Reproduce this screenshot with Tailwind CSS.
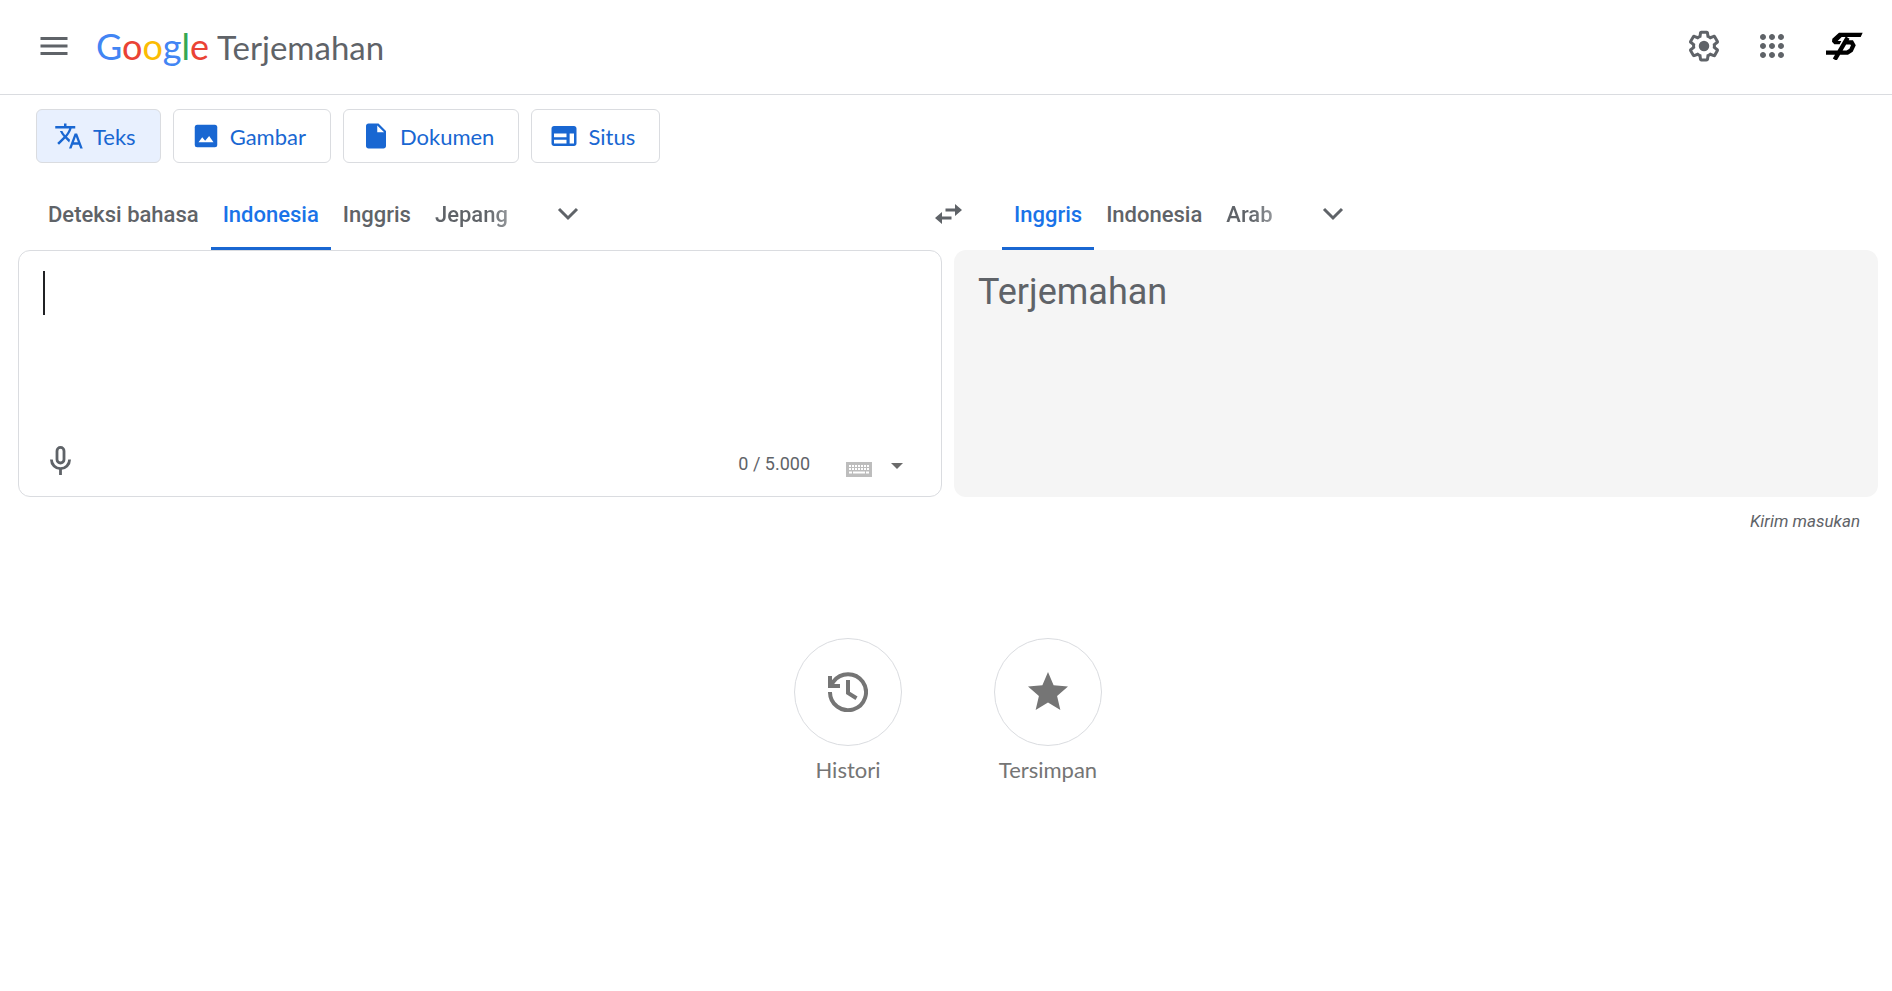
<!DOCTYPE html>
<html lang="id">
<head>
<meta charset="utf-8">
<meta name="viewport" content="width=device-width, initial-scale=1">
<title>Google Terjemahan</title>
<script src="https://cdn.jsdelivr.net/npm/@tailwindcss/browser@4"></script>
</head>
<body class="min-h-screen bg-white font-['Roboto',sans-serif] text-[#5f6368]">
<header class="flex h-[95px] items-center justify-between border-b border-[#dadce0] pr-[26px] pb-[2px] pl-9">
  <div class="flex items-center gap-6">
    <button type="button" aria-label="Menu utama" class="flex size-9 items-center justify-center">
      <svg class="size-9" viewBox="0 0 24 24" fill="currentColor"><path d="M3 18h18v-2H3v2zm0-5h18v-2H3v2zm0-7v2h18V6H3z"/></svg>
    </button>
    <a href="#" class="flex items-baseline gap-2 font-['Lato',sans-serif] whitespace-nowrap">
      <span class="text-[36px] leading-[44px]"><span class="text-[#4285f4]">G</span><span class="text-[#ea4335]">o</span><span class="text-[#fbbc04]">o</span><span class="text-[#4285f4]">g</span><span class="text-[#34a853]">l</span><span class="text-[#ea4335]">e</span></span>
      <span class="text-[33px] leading-[44px]">Terjemahan</span>
    </a>
  </div>
  <div class="flex items-center gap-8">
    <button type="button" aria-label="Setelan" class="flex size-9 items-center justify-center">
      <svg class="size-9" viewBox="0 0 24 24" fill="currentColor"><path d="M13.85 22.25h-3.7c-.74 0-1.36-.54-1.45-1.27l-.27-1.89c-.27-.14-.53-.29-.79-.46l-1.8.72c-.7.26-1.47-.03-1.81-.65L2.2 15.53c-.35-.66-.2-1.44.36-1.88l1.53-1.19c-.01-.15-.02-.3-.02-.46 0-.15.01-.31.02-.46l-1.52-1.19c-.59-.45-.74-1.26-.37-1.88l1.85-3.19c.34-.62 1.11-.9 1.79-.63l1.81.73c.26-.17.52-.32.78-.46l.27-1.91c.09-.7.71-1.25 1.44-1.25h3.7c.74 0 1.36.54 1.45 1.27l.27 1.89c.27.14.53.29.79.46l1.8-.72c.71-.26 1.48.03 1.82.65l1.84 3.18c.36.66.2 1.44-.36 1.88l-1.52 1.19c.01.15.02.3.02.46s-.01.31-.02.46l1.52 1.19c.56.45.72 1.23.37 1.86l-1.86 3.22c-.34.62-1.11.9-1.8.63l-1.8-.72c-.26.17-.52.32-.78.46l-.27 1.91c-.1.68-.72 1.22-1.46 1.22zm-3.23-2h2.76l.37-2.55.53-.22c.44-.18.88-.44 1.34-.78l.45-.34 2.38.96 1.38-2.4-2.03-1.58.07-.56c.03-.26.06-.51.06-.78s-.03-.53-.06-.78l-.07-.56 2.03-1.58-1.39-2.4-2.39.96-.45-.35c-.42-.32-.87-.58-1.33-.77l-.52-.22-.37-2.55h-2.76l-.37 2.55-.53.21c-.44.19-.88.44-1.34.79l-.45.33-2.38-.95-1.39 2.39 2.03 1.58-.07.56a7 7 0 0 0-.06.79c0 .26.02.53.06.78l.07.56-2.03 1.58 1.38 2.4 2.39-.96.45.35c.43.33.86.58 1.33.77l.53.22.38 2.55z"/><circle cx="12" cy="12" r="3.5"/></svg>
    </button>
    <button type="button" aria-label="Aplikasi Google" class="flex size-9 items-center justify-center">
      <svg class="size-9" viewBox="0 0 24 24" fill="currentColor"><path d="M6 8c1.1 0 2-.9 2-2s-.9-2-2-2-2 .9-2 2 .9 2 2 2zm6 12c1.1 0 2-.9 2-2s-.9-2-2-2-2 .9-2 2 .9 2 2 2zm-6 0c1.1 0 2-.9 2-2s-.9-2-2-2-2 .9-2 2 .9 2 2 2zm0-6c1.1 0 2-.9 2-2s-.9-2-2-2-2 .9-2 2 .9 2 2 2zm6 0c1.1 0 2-.9 2-2s-.9-2-2-2-2 .9-2 2 .9 2 2 2zm4-8c0 1.1.9 2 2 2s2-.9 2-2-.9-2-2-2-2 .9-2 2zm-4 2c1.1 0 2-.9 2-2s-.9-2-2-2-2 .9-2 2 .9 2 2 2zm6 6c1.1 0 2-.9 2-2s-.9-2-2-2-2 .9-2 2 .9 2 2 2zm0 6c1.1 0 2-.9 2-2s-.9-2-2-2-2 .9-2 2 .9 2 2 2z"/></svg>
    </button>
    <button type="button" aria-label="Akun Google" class="flex h-9 w-11 items-center justify-center text-black">
      <svg class="h-[28px] w-[38px]" viewBox="0 0 114 84" fill="none" stroke="currentColor" stroke-width="13"><path d="M113 2H42L22 20L21 29L28 37H44L49 27H38L50 15H107Z" fill="currentColor" stroke="none"/><path d="M68 17L29 83M60 31H80L85 40L78 55L67 62H3"/></svg>
    </button>
  </div>
</header>

<main>
  <nav aria-label="Jenis terjemahan" class="flex gap-3 px-9 pt-[14px] font-['Lato',sans-serif] text-[22px] text-[#1967d2]">
    <button type="button" class="flex h-[54px] items-center gap-[9px] rounded-md border border-[#dadce0] bg-[#e8f0fe] pr-6 pl-[17px]">
      <svg class="size-[30px]" viewBox="0 0 24 24" fill="currentColor"><path d="M12.87 15.07l-2.54-2.51.03-.03c1.74-1.94 2.98-4.17 3.71-6.53H17V4h-7V2H8v2H1v1.990h11.170C11.500 7.920 10.440 9.750 9 11.350 8.070 10.320 7.300 9.190 6.690 8h-2c.73 1.630 1.730 3.170 2.980 4.560l-5.090 5.020L4 19l5-5 3.110 3.110.76-2.040zM18.500 10h-2L12 22h2l1.120-3h4.750L21 22h2l-4.500-12zm-2.620 7l1.620-4.330L19.120 17h-3.240z"/></svg>Teks
    </button>
    <button type="button" class="flex h-[54px] items-center gap-[9px] rounded-md border border-[#dadce0] pr-6 pl-[17px]">
      <svg class="size-[30px]" viewBox="0 0 24 24"><rect x="3" y="3" width="18" height="18" rx="2" fill="currentColor"/><path d="M6 17l3-4 2.300 2.800L14.500 12 18 17z" fill="#fff"/></svg>Gambar
    </button>
    <button type="button" class="flex h-[54px] items-center gap-[9px] rounded-md border border-[#dadce0] pr-6 pl-[17px]">
      <svg class="size-[30px]" viewBox="0 0 24 24" fill="currentColor"><path d="M6 2c-1.100 0-1.990.9-1.990 2L4 20c0 1.100.89 2 1.990 2H18c1.100 0 2-.9 2-2V8l-6-6H6zm7 7V3.500L18.500 9H13z"/></svg>Dokumen
    </button>
    <button type="button" class="flex h-[54px] items-center gap-[9px] rounded-md border border-[#dadce0] pr-6 pl-[17px]">
      <svg class="size-[30px]" viewBox="0 0 24 24" fill="currentColor"><path d="M20 4H4c-1.100 0-1.990.9-1.990 2L2 18c0 1.100.9 2 2 2h16c1.100 0 2-.9 2-2V6c0-1.100-.9-2-2-2zm-6 14H4v-3h10v3zm0-5H4v-3h10v3zm6 5h-3.500v-8H20v8z"/></svg>Situs
    </button>
  </nav>

  <div class="mt-[15px] grid grid-cols-[1fr_108px_1fr] pr-[14px] pl-[18px] text-[22px] font-medium">
    <div class="flex h-[72px] pl-[18px]">
      <button type="button" class="px-3">Deteksi bahasa</button>
      <button type="button" class="border-b-[3px] border-[#1967d2] px-3 pt-[3px] text-[#1a73e8]">Indonesia</button>
      <button type="button" class="px-3">Inggris</button>
      <button type="button" class="bg-linear-to-r from-[#5f6368] from-65% to-[#b0b3b6] bg-clip-text px-3 text-transparent">Jepang</button>
      <button type="button" aria-label="Bahasa sumber lainnya" class="ml-6 px-3"><svg class="size-6" viewBox="0 0 24 24" fill="none" stroke="currentColor" stroke-width="3"><path d="M3 7l9 9 9-9"/></svg></button>
    </div>
    <button type="button" aria-label="Tukar bahasa" class="flex items-center justify-center"><svg class="h-[20px] w-[27px]" viewBox="0 0 27 20" fill="currentColor"><path d="M20 0l7 6-7 6V7.500H10.500v-3H20zM7 8v4.500h9.500v3H7V20l-7-6z"/></svg></button>
    <div class="flex">
      <button type="button" class="border-b-[3px] border-[#1967d2] px-3 pt-[3px] text-[#1a73e8]">Inggris</button>
      <button type="button" class="px-3">Indonesia</button>
      <button type="button" class="bg-linear-to-r from-[#5f6368] from-50% to-[#b0b3b6] bg-clip-text px-3 text-transparent">Arab</button>
      <button type="button" aria-label="Bahasa target lainnya" class="ml-6 px-3"><svg class="size-6" viewBox="0 0 24 24" fill="none" stroke="currentColor" stroke-width="3"><path d="M3 7l9 9 9-9"/></svg></button>
    </div>
  </div>

  <div class="grid grid-cols-2 gap-x-3 pr-[14px] pl-[18px]">
    <section aria-label="Teks sumber" class="flex h-[247px] flex-col rounded-xl border border-[#dadce0]">
      <div class="flex flex-1 pt-5 pr-6 pl-6">
        <span class="h-11 w-[2px] bg-[#202124]"></span>
        <textarea aria-label="Ketik teks untuk diterjemahkan" class="flex-1 resize-none text-[36px] leading-[44px] caret-transparent outline-none"></textarea>
      </div>
      <div class="flex h-[72px] items-center justify-between pr-[38px] pl-[31px]">
        <button type="button" aria-label="Terjemahkan dengan suara"><svg class="h-[29px] w-[21px]" viewBox="0 0 21 29" fill="none" stroke="currentColor" stroke-width="2.800"><rect x="7" y="1.400" width="7" height="15.600" rx="3.500"/><path d="M1.400 13.500a9.100 9.100 0 0 0 18.200 0M10.500 22.600V29"/></svg></button>
        <div class="flex items-center pt-[6px]">
          <span class="text-[18px]">0 / 5.000</span>
          <button type="button" aria-label="Aktifkan keyboard virtual" class="ml-9 pt-3"><svg class="h-[15px] w-[26px]" viewBox="0 0 26 15"><rect width="26" height="15" fill="#bdbdbd"/><path d="M3 4h20M3 7h20" stroke="#fff" stroke-width="2" stroke-dasharray="2 1"/><path d="M3 10.500h3M7 10.500h12M20 10.500h3" stroke="#fff" stroke-width="2"/></svg></button>
          <button type="button" aria-label="Pilih alat input" class="ml-[19px] pt-[6px]"><svg class="h-[6px] w-[12px]" viewBox="0 0 12 6" fill="#6b6b6b"><path d="M0 0h12L6 6z"/></svg></button>
        </div>
      </div>
    </section>
    <section aria-label="Hasil terjemahan" class="rounded-xl bg-[#f5f5f5] px-6 pt-5 text-[36px] leading-[44px]">Terjemahan</section>
  </div>

  <div class="mt-3 flex justify-end pr-8"><a href="#" class="text-[17px] leading-6 italic">Kirim masukan</a></div>

  <div class="mt-[105px] flex justify-center gap-[92px] pl-1 font-['Lato',sans-serif] text-[22px] leading-8 text-[#757575]">
    <button type="button" class="flex w-[108px] flex-col items-center gap-2">
      <span class="flex size-[108px] items-center justify-center rounded-full border border-[#dadce0]"><svg class="size-10" viewBox="0 0 40 40" fill="none" stroke="currentColor" stroke-width="4"><path d="M2 20A18 18 0 1 0 5.500 9.500L3 13M2 4v10h10M20 8v13l8.500 5.200"/></svg></span>Histori
    </button>
    <button type="button" class="flex w-[108px] flex-col items-center gap-2">
      <span class="flex size-[108px] items-center justify-center rounded-full border border-[#dadce0]"><svg class="size-12" viewBox="0 0 24 24" fill="currentColor"><path d="M12 17.270L18.180 21l-1.640-7.030L22 9.240l-7.190-.61L12 2 9.190 8.630 2 9.240l5.460 4.730L5.820 21z"/></svg></span>Tersimpan
    </button>
  </div>
</main>
</body>
</html>
